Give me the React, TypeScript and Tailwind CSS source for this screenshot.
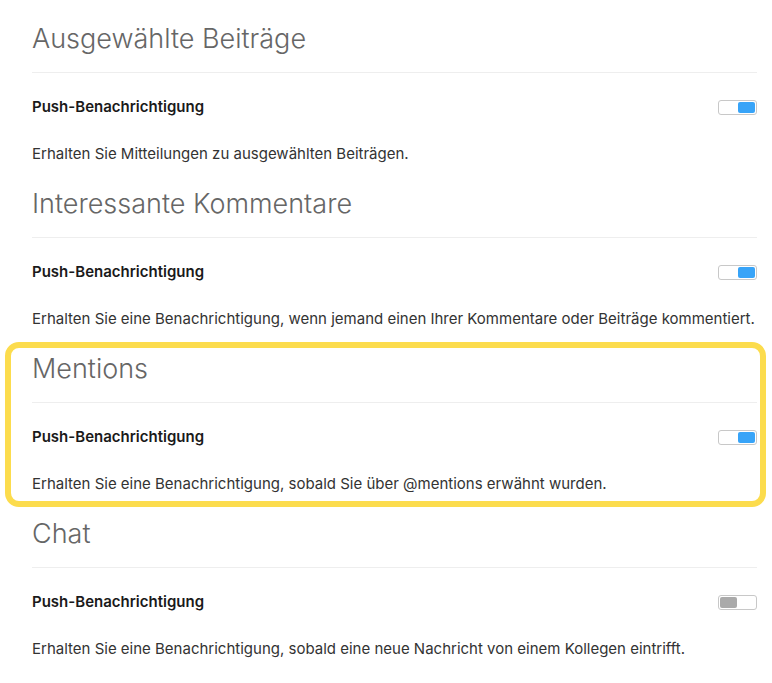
const sections = [
  {
    title: "Ausgewählte Beiträge",
    text: "Erhalten Sie Mitteilungen zu ausgewählten Beiträgen.",
    on: true,
  },
  {
    title: "Interessante Kommentare",
    text: "Erhalten Sie eine Benachrichtigung, wenn jemand einen Ihrer Kommentare oder Beiträge kommentiert.",
    on: true,
  },
  {
    title: "Mentions",
    text: "Erhalten Sie eine Benachrichtigung, sobald Sie über @mentions erwähnt wurden.",
    on: true,
    highlight: true,
  },
  {
    title: "Chat",
    text: "Erhalten Sie eine Benachrichtigung, sobald eine neue Nachricht von einem Kollegen eintrifft.",
    on: false,
  },
];

function Toggle({ on }: { on: boolean }) {
  return (
    <div
      className={
        "flex h-[15px] w-[39px] items-center rounded-[3px] border border-[#c8c8c8] bg-white px-[1px] " +
        (on ? "justify-end" : "justify-start")
      }
    >
      <div
        className={
          "h-[11px] w-[17px] rounded-[2px] " +
          (on ? "bg-[#38a4f8]" : "bg-[#aaaaaa]")
        }
      />
    </div>
  );
}

function Section({ title, text, on }: { title: string; text: string; on: boolean }) {
  return (
    <div className="flex flex-col">
      <h2 className="text-[27px] font-light leading-[32px] text-[#666666]">{title}</h2>
      <div className="mt-[17px] h-px bg-[#eeeeee]" />
      <div className="mt-6 flex h-5 items-center justify-between">
        <span className="text-[15px] font-semibold text-[#1a1a1a]">Push-Benachrichtigung</span>
        <Toggle on={on} />
      </div>
      <p className="mt-[27px] text-[15px] leading-5 text-[#333333]">{text}</p>
    </div>
  );
}

export default function App() {
  return (
    <div
      className="min-h-screen bg-white pl-8 pr-[15px] pt-[23px]"
      style={{ fontFamily: "Inter, 'Noto Sans', sans-serif" }}
    >
      <div className="flex flex-col gap-6">
        {sections.map((s) =>
          s.highlight ? (
            <div
              key={s.title}
              className="-mb-[13px] -ml-[27px] -mr-[9px] -mt-[11px] rounded-[14px] border-[6px] border-[#fcdc4d] pb-[7px] pl-[21px] pr-[3px] pt-[5px]"
            >
              <Section title={s.title} text={s.text} on={s.on} />
            </div>
          ) : (
            <Section key={s.title} title={s.title} text={s.text} on={s.on} />
          )
        )}
      </div>
    </div>
  );
}
